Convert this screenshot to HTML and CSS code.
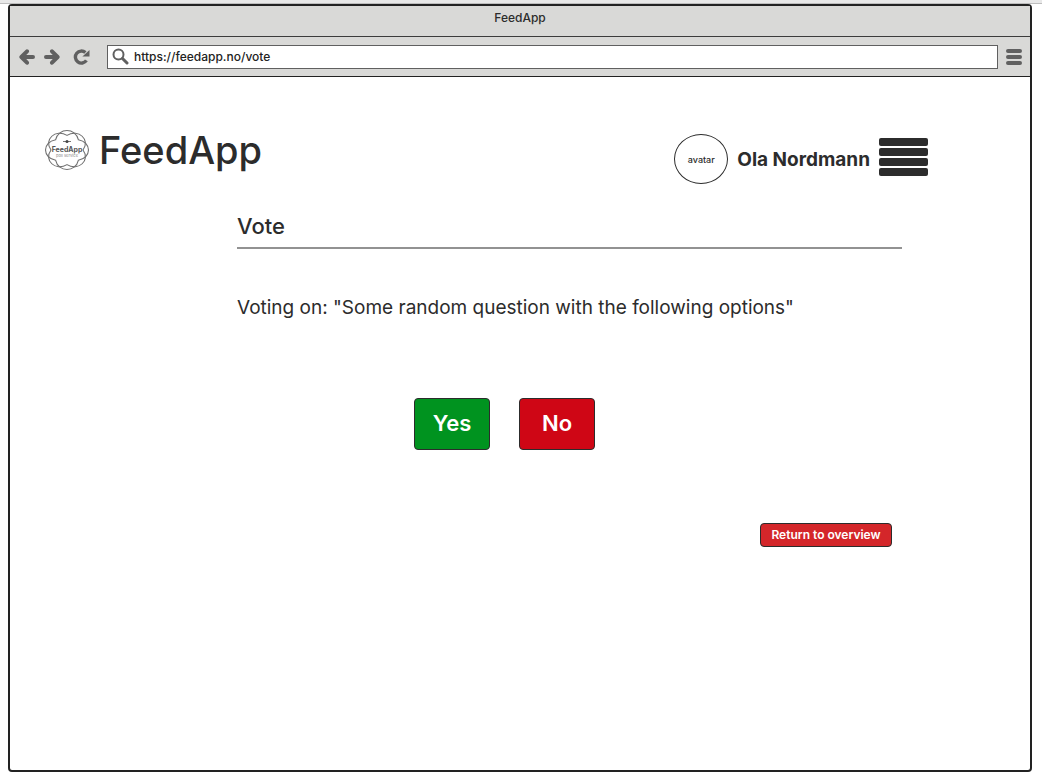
FILE: index.html
```html
<!DOCTYPE html>
<html lang="en">
<head>
<meta charset="utf-8">
<meta name="viewport" content="width=device-width, initial-scale=1">
<title>FeedApp</title>
<link rel="stylesheet" href="styles.css">
</head>
<body>
<div class="strip"></div>
<div class="window">
  <div class="titlebar">FeedApp</div>
  <div class="toolbar">
    <button class="tool" type="button" aria-label="Back">
      <svg width="16" height="16" viewBox="0 0 16 16" fill="none" stroke="currentColor" stroke-width="4" stroke-linecap="round" stroke-linejoin="round"><path d="M14 8H3M8 2.3L2.4 8L8 13.7"/></svg>
    </button>
    <button class="tool tool-forward" type="button" aria-label="Forward">
      <svg width="16" height="16" viewBox="0 0 16 16" fill="none" stroke="currentColor" stroke-width="4" stroke-linecap="round" stroke-linejoin="round"><path d="M2 8H13M8 2.3L13.6 8L8 13.7"/></svg>
    </button>
    <button class="tool tool-reload" type="button" aria-label="Reload">
      <svg width="18" height="16" viewBox="0 0 18 16"><path d="M12.4 3.6A6 6 0 1 0 13.4 11.4" fill="none" stroke="currentColor" stroke-width="3.4"/><path d="M16.5 1V7.6H9.4z" fill="currentColor"/></svg>
    </button>
    <label class="address">
      <svg width="17" height="17" viewBox="0 0 17 17" fill="none" stroke="currentColor"><circle cx="6.5" cy="6.5" r="5" stroke-width="2"/><path d="M10.5 10.5L15 15" stroke-width="3" stroke-linecap="round"/></svg>
      <input class="address-input" type="text" value="https://feedapp.no/vote" aria-label="Address">
    </label>
    <button class="tool tool-menu" type="button" aria-label="Browser menu">
      <svg width="16" height="16" viewBox="0 0 16 16" stroke="currentColor" stroke-width="4" stroke-linecap="round"><path d="M2 2H14M2 8H14M2 14H14"/></svg>
    </button>
  </div>
  <header class="header">
    <div class="brand">
      <svg class="logo" width="44" height="40" viewBox="0 0 44 40" aria-hidden="true">
        <g transform="translate(22 20) scale(1.08 .98)" fill="none" stroke="#707070">
          <path d="M-10.5 -10.5C-8 -23 8 -23 10.5 -10.5C23 -8 23 8 10.5 10.5C8 23 -8 23 -10.5 10.5C-23 8 -23 -8 -10.5 -10.5Z"/>
          <path transform="rotate(45)" d="M-10.5 -10.5C-8 -23 8 -23 10.5 -10.5C23 -8 23 8 10.5 10.5C8 23 -8 23 -10.5 10.5C-23 8 -23 -8 -10.5 -10.5Z"/>
        </g>
        <path d="M18 11.5H26" stroke="#777777"/><circle cx="22" cy="11.5" r="1.5" fill="#444444"/>
        <text class="logo-name" x="22" y="22" text-anchor="middle">FeedApp</text>
        <text class="logo-tag" x="22" y="27" text-anchor="middle">poll service</text>
      </svg>
      <h1 class="brand-name">FeedApp</h1>
    </div>
    <div class="account">
      <div class="avatar">avatar</div>
      <span class="user">Ola Nordmann</span>
      <button class="menu" type="button" aria-label="Menu">
        <span class="bar"></span><span class="bar"></span><span class="bar"></span><span class="bar"></span>
      </button>
    </div>
  </header>
  <main class="main">
    <h2 class="heading">Vote</h2>
    <p class="question">Voting on: "Some random question with the following options"</p>
    <div class="choices">
      <button class="choice yes" type="button">Yes</button>
      <button class="choice no" type="button">No</button>
    </div>
    <div class="footer">
      <button class="return" type="button">Return to overview</button>
    </div>
  </main>
</div>
</body>
</html>
```

FILE: styles.css
```css
* { box-sizing: border-box; }

body {
  margin: 0;
  min-height: 100vh;
  display: flex;
  flex-direction: column;
  background: #ffffff;
  color: #2c2c2c;
  font-family: Inter, "Liberation Sans", sans-serif;
  font-weight: 500;
}

button, input { font: inherit; color: inherit; }
button { padding: 0; cursor: pointer; }
svg { display: block; }

.strip {
  height: 4px;
  background: #e8e8e8;
  border-bottom: 1px solid #bdbdbd;
}

.window {
  flex: 1;
  margin: 0 10px 5px 8px;
  border: 2px solid #222222;
  border-radius: 4px;
}

.titlebar {
  height: 31px;
  padding-top: 4px;
  background: #d9d9d7;
  border-bottom: 1px solid #3c3c3c;
  font-size: 12px;
  line-height: 16px;
  text-align: center;
}

.toolbar {
  display: flex;
  align-items: center;
  height: 40px;
  padding: 0 8px 0 9px;
  background: #d9d9d7;
  border-bottom: 1px solid #222222;
  color: #606060;
}

.tool { border: 0; background: none; }
.tool-forward { margin-left: 9px; }
.tool-reload { margin-left: 13px; }
.tool-menu { margin-left: 8px; }

.address {
  flex: 1;
  display: flex;
  align-items: center;
  gap: 5px;
  height: 24px;
  margin-left: 16px;
  padding-left: 4px;
  background: #ffffff;
  border: 1px solid #606060;
}

.address-input {
  flex: 1;
  min-width: 0;
  padding: 0;
  border: 0;
  outline: 0;
  background: none;
  color: #222222;
  font-size: 12px;
}

.header {
  display: flex;
  justify-content: space-between;
  align-items: flex-start;
  padding: 48px 102px 0 35px;
}

.brand { display: flex; align-items: center; gap: 10px; }
.logo-name { font-size: 7px; font-weight: 700; fill: #555555; }
.logo-tag { font-size: 4px; fill: #999999; }

.brand-name {
  margin: 0;
  font-size: 38px;
  line-height: 50px;
  font-weight: 500;
}

.account {
  display: flex;
  align-items: center;
  gap: 9px;
  margin-top: 9px;
}

.avatar {
  display: flex;
  align-items: center;
  justify-content: center;
  width: 54px;
  height: 50px;
  border: 1px solid #2c2c2c;
  border-radius: 50%;
  font-size: 9px;
}

.user { font-size: 19px; font-weight: 700; }

.menu {
  display: flex;
  flex-direction: column;
  gap: 2px;
  width: 49px;
  margin-bottom: 4px;
  border: 0;
  background: none;
}

.bar { height: 8px; border-radius: 2px; background: #2c2c2c; }

.main { padding: 29px 128px 0 227px; }

.heading {
  margin: 0;
  padding-bottom: 8px;
  border-bottom: 2px solid #929292;
  font-size: 22px;
  line-height: 26px;
  font-weight: 500;
}

.question {
  margin: 46px 0 0;
  font-size: 19px;
  line-height: 26px;
  font-weight: 400;
}

.choices {
  display: flex;
  gap: 29px;
  margin-top: 77px;
  padding-left: 177px;
}

.choice {
  width: 76px;
  height: 52px;
  padding-bottom: 2px;
  border: 1px solid #2c2c2c;
  border-radius: 4px;
  color: #ffffff;
  font-size: 22px;
  font-weight: 600;
}

.yes { background: #00931f; }
.no { background: #cf0615; }

.footer {
  display: flex;
  justify-content: flex-end;
  margin-top: 73px;
  padding-right: 10px;
}

.return {
  width: 132px;
  height: 24px;
  padding-bottom: 2px;
  border: 1px solid #2c2c2c;
  border-radius: 4px;
  background: #d4262a;
  color: #ffffff;
  font-size: 12px;
  font-weight: 600;
}
```
